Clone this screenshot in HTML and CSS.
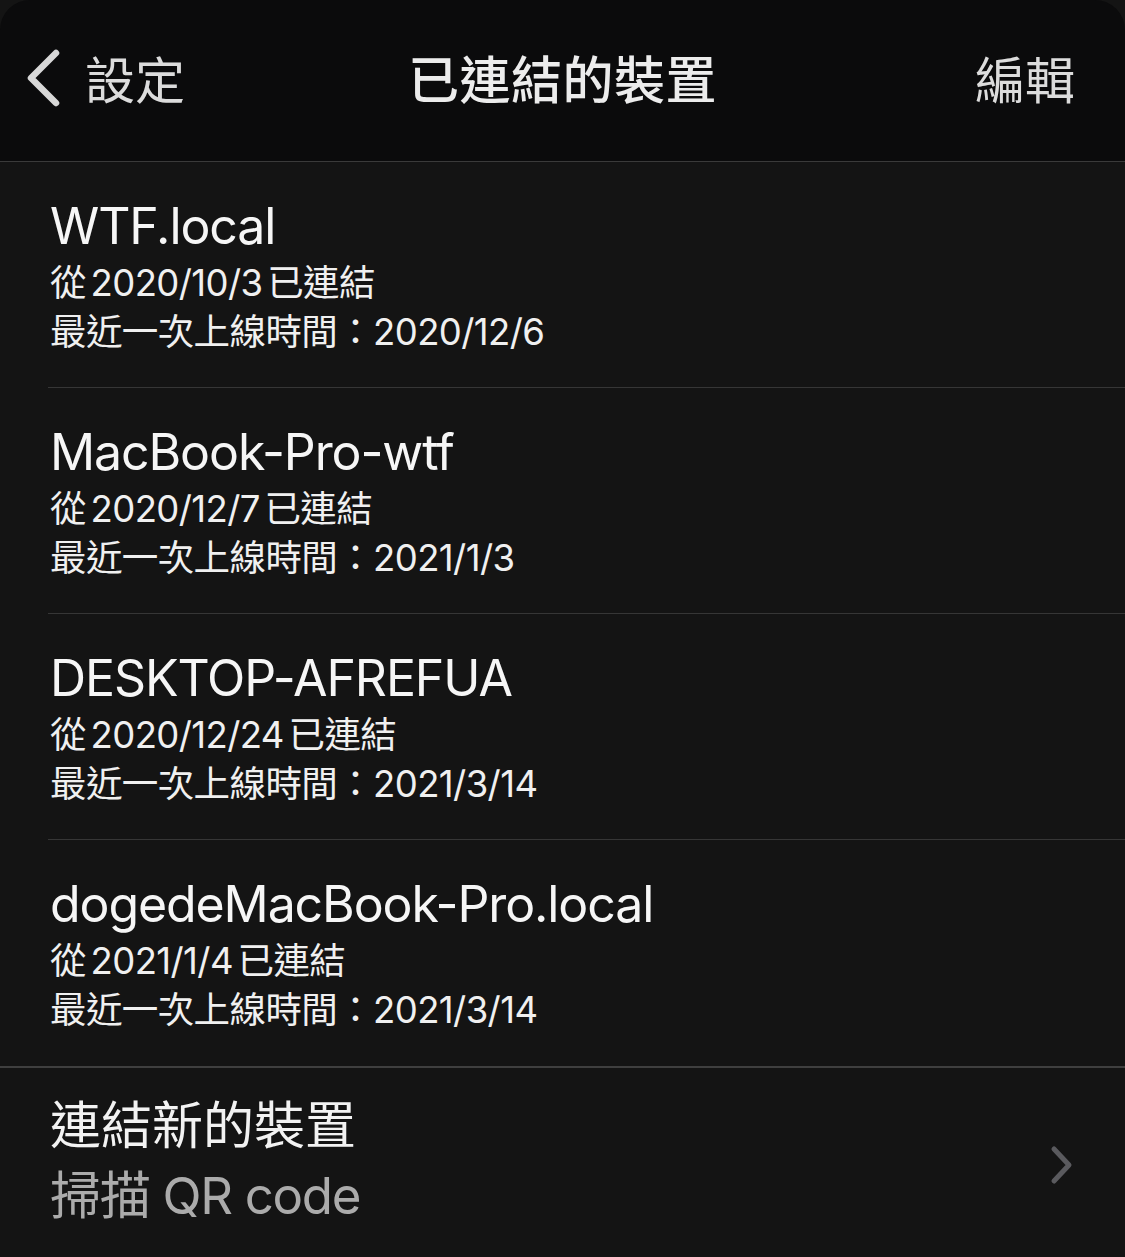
FILE: index.html
```html
<!DOCTYPE html>
<html lang="zh-Hant">
<head>
<meta charset="utf-8">
<title>已連結的裝置</title>
<link rel="stylesheet" href="styles.css">
</head>
<body>
<div class="screen">
  <header class="nav">
    <div class="nav-left">
      <svg class="back-icon" width="36" height="58" viewBox="0 0 36 58" aria-hidden="true">
        <path d="M31 4 L6 29 L31 54" fill="none" stroke="#d8d8d8" stroke-width="6.5" stroke-linecap="round" stroke-linejoin="round"/>
      </svg>
      <span class="nav-back-label">設定</span>
    </div>
    <h1 class="nav-title">已連結的裝置</h1>
    <div class="nav-right">編輯</div>
  </header>

  <main class="list">
    <section class="device">
      <div class="device-name">WTF.local</div>
      <div class="device-meta">從 2020/10/3 已連結</div>
      <div class="device-meta">最近一次上線時間：2020/12/6</div>
    </section>
    <section class="device">
      <div class="device-name">MacBook-Pro-wtf</div>
      <div class="device-meta">從 2020/12/7 已連結</div>
      <div class="device-meta">最近一次上線時間：2021/1/3</div>
    </section>
    <section class="device">
      <div class="device-name">DESKTOP-AFREFUA</div>
      <div class="device-meta">從 2020/12/24 已連結</div>
      <div class="device-meta">最近一次上線時間：2021/3/14</div>
    </section>
    <section class="device device-last">
      <div class="device-name">dogedeMacBook-Pro.local</div>
      <div class="device-meta">從 2021/1/4 已連結</div>
      <div class="device-meta">最近一次上線時間：2021/3/14</div>
    </section>
  </main>

  <div class="link-new">
    <div class="link-text">
      <div class="link-title">連結新的裝置</div>
      <div class="link-sub">掃描 QR code</div>
    </div>
    <svg class="chevron" width="26" height="40" viewBox="0 0 26 40" aria-hidden="true">
      <path d="M5 4 L20 20 L5 36" fill="none" stroke="#5a5a5e" stroke-width="5" stroke-linecap="round" stroke-linejoin="round"/>
    </svg>
  </div>
</div>
</body>
</html>
```

FILE: styles.css
```css
html, body {
  margin: 0;
  padding: 0;
  background: #161616;
}

body {
  font-family: "Inter", "Noto Sans CJK TC", sans-serif;
  color: #f4f4f4;
  width: 1125px;
  height: 1257px;
  overflow: hidden;
}

.screen {
  width: 1125px;
  height: 1257px;
  display: flex;
  flex-direction: column;
  background: #141414;
}

.nav {
  height: 162px;
  box-sizing: border-box;
  flex: 0 0 auto;
  background: #0b0b0c;
  border-radius: 30px 30px 0 0;
  border-bottom: 1.5px solid #3a3a3a;
  display: grid;
  grid-template-columns: 1fr auto 1fr;
  align-items: center;
  padding: 0 0 8px 0;
}

.nav-left {
  display: flex;
  align-items: center;
  gap: 24px;
  padding-left: 25px;
  color: #dcdcdc;
  font-size: 50px;
  font-family: "Noto Sans CJK TC", sans-serif;
}

.back-icon {
  display: block;
  margin-top: 2px;
}

.nav-back-label {
  line-height: 60px;
}

.nav-title {
  margin: 0;
  font-family: "Noto Sans CJK TC", sans-serif;
  font-size: 51px;
  font-weight: 500;
  color: #ececec;
  line-height: 60px;
  letter-spacing: 0.5px;
}

.nav-right {
  justify-self: end;
  padding-right: 50px;
  font-family: "Noto Sans CJK TC", sans-serif;
  font-size: 50px;
  color: #dcdcdc;
  line-height: 60px;
}

.list {
  display: flex;
  flex-direction: column;
  padding-left: 48px;
}

.device {
  height: 226px;
  box-sizing: border-box;
  border-bottom: 1.5px solid #363636;
  padding-top: 34px;
  padding-left: 2px;
}

.device-last {
  border-bottom: none;
  margin-left: -48px;
  padding-left: 50px;
}

.device-name {
  font-size: 50px;
  line-height: 60px;
  letter-spacing: -1.1px;
  color: #f6f6f6;
  white-space: nowrap;
  margin-bottom: 3px;
}

.device-meta {
  font-size: 36.5px;
  line-height: 49px;
  letter-spacing: -0.6px;
  word-spacing: -5px;
  color: #f0f0f0;
  white-space: nowrap;
}

.link-new {
  flex: 1 1 auto;
  border-top: 2px solid #3f3f3f;
  display: flex;
  align-items: center;
  justify-content: space-between;
  padding: 0 50px 0 50px;
  background: #141414;
}

.link-text {
  display: flex;
  flex-direction: column;
  margin-top: -4px;
}

.link-title {
  font-size: 51px;
  line-height: 70px;
  color: #f2f2f2;
}

.link-sub {
  font-size: 51px;
  line-height: 70px;
  letter-spacing: -1.3px;
  color: #ababab;
}

.chevron {
  display: block;
  margin-top: 4px;
}
```
